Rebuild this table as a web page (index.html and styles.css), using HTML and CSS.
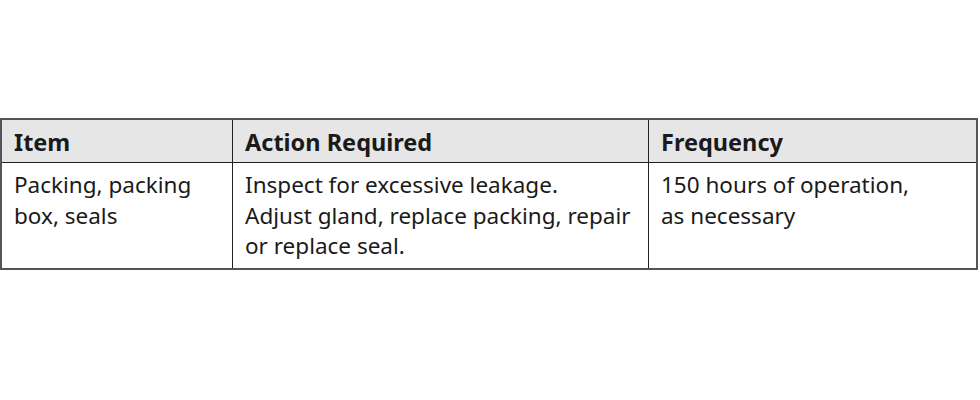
FILE: index.html
```html
<!DOCTYPE html>
<html lang="en">
<head>
<meta charset="utf-8">
<title>Maintenance schedule</title>
<link rel="stylesheet" href="styles.css">
</head>
<body>
<main class="page">
  <div class="table" role="table">
    <div class="cell head" role="columnheader">Item</div>
    <div class="cell head" role="columnheader">Action Required</div>
    <div class="cell head last" role="columnheader">Frequency</div>
    <div class="cell body" role="cell">Packing, packing<br>box, seals</div>
    <div class="cell body" role="cell">Inspect for excessive leakage.<br>Adjust gland, replace packing, repair<br>or replace seal.</div>
    <div class="cell body last" role="cell">150 hours of operation,<br>as necessary</div>
  </div>
</main>
</body>
</html>
```
FILE: styles.css
```css
html, body {
  margin: 0;
  padding: 0;
  background: #ffffff;
}

.page {
  padding-top: 118px;
}

.table {
  width: 978px;
  box-sizing: border-box;
  display: grid;
  grid-template-columns: 231px 416px 1fr;
  border: 2px solid #555555;
  font-family: "Noto Sans", "Open Sans", sans-serif;
  color: #1a1a1a;
}

.cell {
  border-right: 1px solid #222222;
  padding: 0 12px;
}

.cell.last {
  border-right: none;
}

.head {
  background: #e6e6e7;
  font-weight: 700;
  font-size: 23.5px;
  line-height: 30px;
  padding-top: 7px;
  padding-bottom: 5px;
  border-bottom: 1px solid #222222;
}

.body {
  font-size: 22.5px;
  line-height: 30.7px;
  padding-top: 7px;
  padding-bottom: 6px;
}
```
